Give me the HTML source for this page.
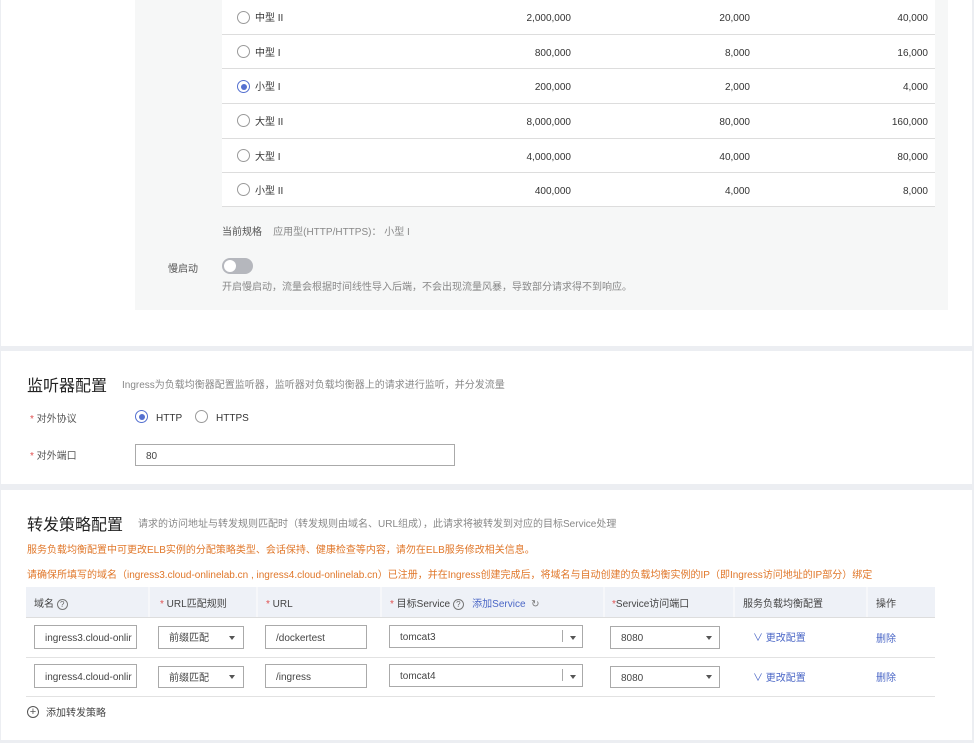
<!DOCTYPE html>
<html><head><meta charset="utf-8"><style>
*{margin:0;padding:0;box-sizing:border-box}
body{width:974px;height:743px;background:#eceef2;font-family:"Liberation Sans","Noto Sans CJK SC",sans-serif;font-size:10px;color:#333;position:relative;overflow:hidden}
.a{position:absolute;line-height:12px;padding-top:3px}
.panel{position:absolute;left:1px;width:971px;background:#fff}
.radio{position:absolute;width:13px;height:13px;border:1px solid #9a9a9a;border-radius:50%;background:#fff}
.radio.on{border-color:#5470d0}
.radio.on::after{content:"";position:absolute;left:2.5px;top:2.5px;width:6px;height:6px;border-radius:50%;background:#5470d0}
.row{position:absolute;left:222px;width:713px;border-bottom:1px solid #ddd;background:#fff}
.row span{position:absolute;top:0;height:100%;display:flex;align-items:center;line-height:12px;padding-top:4px}
.num{justify-content:flex-end;width:100px}
.inp{position:absolute;height:24px;border:1px solid #aaa;background:#fff;padding-left:10px;padding-top:3px;display:flex;align-items:center;font-size:10px;color:#444;line-height:12px;white-space:nowrap;overflow:hidden}
.star{color:#e05050}
.orange{color:#e0772a}
.caret{position:absolute;width:0;height:0;border-left:3px solid transparent;border-right:3px solid transparent;border-top:4px solid #555}
.link{color:#4a66c6}
.q{display:inline-block;width:11px;height:11px;border:1px solid #777;border-radius:50%;font-size:8px;text-align:center;line-height:9px;color:#666;vertical-align:middle}
.box{position:absolute;padding:0}
</style></head><body>
<div class="panel" style="top:0;height:346px"></div>
<div class="box" style="left:135px;top:0;width:813px;height:310px;background:#f6f7f7"></div>
<div class="row" style="top:0;height:35px"><span style="left:33px">中型 II</span><span class="num" style="left:249px">2,000,000</span><span class="num" style="left:428px">20,000</span><span class="num" style="left:606px">40,000</span></div>
<div class="row" style="top:35px;height:34px"><span style="left:33px">中型 I</span><span class="num" style="left:249px">800,000</span><span class="num" style="left:428px">8,000</span><span class="num" style="left:606px">16,000</span></div>
<div class="row" style="top:69px;height:35px"><span style="left:33px">小型 I</span><span class="num" style="left:249px">200,000</span><span class="num" style="left:428px">2,000</span><span class="num" style="left:606px">4,000</span></div>
<div class="row" style="top:104px;height:35px"><span style="left:33px">大型 II</span><span class="num" style="left:249px">8,000,000</span><span class="num" style="left:428px">80,000</span><span class="num" style="left:606px">160,000</span></div>
<div class="row" style="top:139px;height:34px"><span style="left:33px">大型 I</span><span class="num" style="left:249px">4,000,000</span><span class="num" style="left:428px">40,000</span><span class="num" style="left:606px">80,000</span></div>
<div class="row" style="top:173px;height:34px"><span style="left:33px">小型 II</span><span class="num" style="left:249px">400,000</span><span class="num" style="left:428px">4,000</span><span class="num" style="left:606px">8,000</span></div>
<div class="radio" style="left:237px;top:11px"></div>
<div class="radio" style="left:237px;top:45px"></div>
<div class="radio on" style="left:237px;top:80px"></div>
<div class="radio" style="left:237px;top:114px"></div>
<div class="radio" style="left:237px;top:149px"></div>
<div class="radio" style="left:237px;top:183px"></div>
<div class="a" style="left:222px;top:224px;color:#555">当前规格 &nbsp;&nbsp; <span style="color:#888">应用型(HTTP/HTTPS)： 小型 I</span></div>
<div class="a" style="left:168px;top:261px;color:#555">慢启动</div>
<div class="box" style="left:222px;top:258px;width:31px;height:16px;border-radius:8px;background:#b5b7bd"><div class="box" style="left:2px;top:2px;width:12px;height:12px;border-radius:50%;background:#fff"></div></div>
<div class="a" style="left:222px;top:279px;color:#888">开启慢启动，流量会根据时间线性导入后端，不会出现流量风暴，导致部分请求得不到响应。</div>

<div class="panel" style="top:351px;height:133px"></div>
<div class="a" style="left:27px;top:375px;font-size:16px;line-height:20px;color:#222;padding-top:2px">监听器配置</div>
<div class="a" style="left:122px;top:377px;color:#888">Ingress为负载均衡器配置监听器，监听器对负载均衡器上的请求进行监听，并分发流量</div>
<div class="a" style="left:30px;top:411px;color:#555"><span class="star">* </span>对外协议</div>
<div class="radio on" style="left:135px;top:410px"></div><div class="a" style="left:156px;top:410px">HTTP</div>
<div class="radio" style="left:195px;top:410px"></div><div class="a" style="left:216px;top:410px">HTTPS</div>
<div class="a" style="left:30px;top:448px;color:#555"><span class="star">* </span>对外端口</div>
<div class="inp" style="left:135px;top:444px;width:320px;height:22px">80</div>

<div class="panel" style="top:490px;height:250px"></div>
<div class="a" style="left:27px;top:514px;font-size:16px;line-height:20px;color:#222;padding-top:2px">转发策略配置</div>
<div class="a" style="left:138px;top:516px;color:#888">请求的访问地址与转发规则匹配时（转发规则由域名、URL组成），此请求将被转发到对应的目标Service处理</div>
<div class="a orange" style="left:27px;top:542px">服务负载均衡配置中可更改ELB实例的分配策略类型、会话保持、健康检查等内容，请勿在ELB服务修改相关信息。</div>
<div class="a orange" style="left:27px;top:567px">请确保所填写的域名（ingress3.cloud-onlinelab.cn , ingress4.cloud-onlinelab.cn）已注册，并在Ingress创建完成后，将域名与自动创建的负载均衡实例的IP（即Ingress访问地址的IP部分）绑定</div>
<div class="box" style="left:26px;top:587px;width:909px;height:31px;background:#eef1f7;border-bottom:1px solid #ddd"></div>
<div class="box" style="left:148px;top:587px;width:2px;height:30px;background:#f6f7fa"></div>
<div class="box" style="left:256px;top:587px;width:2px;height:30px;background:#f6f7fa"></div>
<div class="box" style="left:380px;top:587px;width:2px;height:30px;background:#f6f7fa"></div>
<div class="box" style="left:603px;top:587px;width:2px;height:30px;background:#f6f7fa"></div>
<div class="box" style="left:733px;top:587px;width:2px;height:30px;background:#f6f7fa"></div>
<div class="box" style="left:866px;top:587px;width:2px;height:30px;background:#f6f7fa"></div>
<div class="a" style="left:34px;top:596px;color:#444">域名 <span class="q">?</span></div>
<div class="a" style="left:160px;top:596px;color:#444"><span class="star">*</span> URL匹配规则</div>
<div class="a" style="left:266px;top:596px;color:#444"><span class="star">*</span> URL</div>
<div class="a" style="left:390px;top:596px;color:#444"><span class="star">*</span> 目标Service <span class="q">?</span> &nbsp;&nbsp;<span class="link">添加Service</span> &nbsp;<span style="color:#777">↻</span></div>
<div class="a" style="left:612px;top:596px;color:#444"><span class="star">*</span>Service访问端口</div>
<div class="a" style="left:743px;top:596px;color:#444">服务负载均衡配置</div>
<div class="a" style="left:876px;top:596px;color:#444">操作</div>

<div class="box" style="left:26px;top:657px;width:909px;height:1px;background:#e2e2e2"></div>
<div class="box" style="left:26px;top:696px;width:909px;height:1px;background:#e2e2e2"></div>

<div class="inp" style="left:34px;top:625px;width:103px">ingress3.cloud-onlir</div>
<div class="inp" style="left:158px;top:626px;width:86px;height:23px">前缀匹配</div><div class="caret" style="left:229px;top:636px"></div>
<div class="inp" style="left:265px;top:625px;width:102px">/dockertest</div>
<div class="inp" style="left:389px;top:625px;width:194px;height:23px">tomcat3</div><div class="box" style="left:562px;top:630px;width:1px;height:12px;background:#aaa"></div><div class="caret" style="left:570px;top:636px"></div>
<div class="inp" style="left:610px;top:626px;width:110px;height:23px">8080</div><div class="caret" style="left:706px;top:636px"></div>
<div class="a link" style="left:753px;top:630px">∨ 更改配置</div>
<div class="a link" style="left:876px;top:631px">删除</div>

<div class="inp" style="left:34px;top:664px;width:103px">ingress4.cloud-onlir</div>
<div class="inp" style="left:158px;top:666px;width:86px;height:22px">前缀匹配</div><div class="caret" style="left:229px;top:675px"></div>
<div class="inp" style="left:265px;top:664px;width:102px">/ingress</div>
<div class="inp" style="left:389px;top:664px;width:194px;height:23px">tomcat4</div><div class="box" style="left:562px;top:669px;width:1px;height:12px;background:#aaa"></div><div class="caret" style="left:570px;top:675px"></div>
<div class="inp" style="left:610px;top:666px;width:110px;height:22px">8080</div><div class="caret" style="left:706px;top:675px"></div>
<div class="a link" style="left:753px;top:670px">∨ 更改配置</div>
<div class="a link" style="left:876px;top:670px">删除</div>

<div class="box" style="left:27px;top:706px;width:12px;height:12px;border:1px solid #555;border-radius:50%;text-align:center;line-height:10px;font-size:11px;color:#555">+</div>
<div class="a" style="left:46px;top:705px;color:#444">添加转发策略</div>
</body></html>
